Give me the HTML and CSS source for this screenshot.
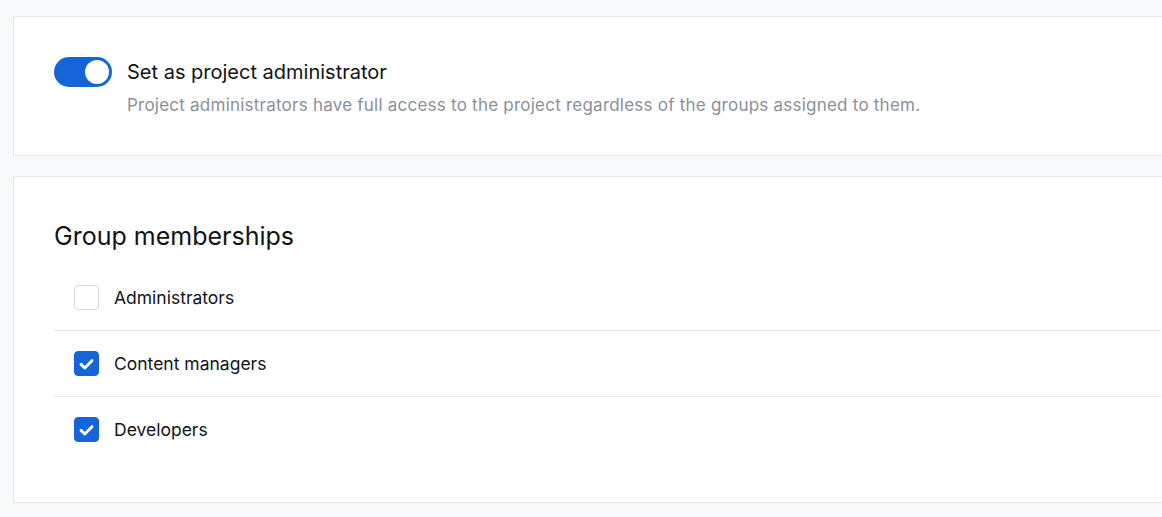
FILE: index.html
```html
<!DOCTYPE html>
<html lang="en">
<head>
<meta charset="utf-8">
<title>Project member</title>
<link rel="stylesheet" href="styles.css">
</head>
<body>
<main class="page">
  <section class="card card-admin">
    <div class="toggle-row">
      <span class="toggle on" role="switch" aria-checked="true"><span class="knob"></span></span>
      <div class="toggle-text">
        <div class="toggle-title">Set as project administrator</div>
        <div class="toggle-desc">Project administrators have full access to the project regardless of the groups assigned to them.</div>
      </div>
    </div>
  </section>
  <section class="card card-groups">
    <h2 class="groups-title">Group memberships</h2>
    <ul class="group-list">
      <li class="group-row">
        <span class="check"></span>
        <span class="group-label">Administrators</span>
      </li>
      <li class="group-row">
        <span class="check checked"><svg viewBox="0 0 24 24"><path d="M6.3 12.4l3.9 3.7 7.5-7.6" fill="none" stroke="#fff" stroke-width="3" stroke-linecap="round" stroke-linejoin="round"/></svg></span>
        <span class="group-label">Content managers</span>
      </li>
      <li class="group-row">
        <span class="check checked"><svg viewBox="0 0 24 24"><path d="M6.3 12.4l3.9 3.7 7.5-7.6" fill="none" stroke="#fff" stroke-width="3" stroke-linecap="round" stroke-linejoin="round"/></svg></span>
        <span class="group-label">Developers</span>
      </li>
    </ul>
  </section>
</main>
</body>
</html>
```
FILE: styles.css
```css
html, body {
  margin: 0;
  padding: 0;
  background: #f8f9fb;
  overflow: hidden;
}
body {
  font-family: Inter, "Noto Sans", sans-serif;
  color: #14171c;
}
.page {
  padding: 16px 0 0 13px;
  display: flex;
  flex-direction: column;
  gap: 20px;
}
.card {
  background: #fff;
  border: 1px solid #e2e7ee;
  margin-right: -40px;
}
.card-admin {
  padding: 40px 40px 38px 40px;
}
.toggle-row {
  display: flex;
  align-items: flex-start;
  gap: 15px;
}
.toggle {
  flex: none;
  width: 58px;
  height: 30px;
  border-radius: 15px;
  background: #1565d8;
  position: relative;
}
.toggle .knob {
  position: absolute;
  top: 3px;
  right: 3px;
  width: 24px;
  height: 24px;
  border-radius: 50%;
  background: #fff;
}
.toggle-text {
  display: flex;
  flex-direction: column;
}
.toggle-title {
  font-size: 20px;
  line-height: 30px;
  color: #111318;
}
.toggle-desc {
  font-size: 17px;
  line-height: 24px;
  margin-top: 6px;
  color: #8b9099;
  letter-spacing: 0.23px;
}
.card-groups {
  padding: 41px 40px 40px 40px;
}
.groups-title {
  margin: 0;
  font-size: 25px;
  font-weight: 400;
  line-height: 36px;
  color: #111318;
}
.group-list {
  list-style: none;
  margin: 11px 0 0 0;
  padding: 0;
}
.group-row {
  display: flex;
  align-items: center;
  gap: 15px;
  height: 66px;
  padding-left: 20px;
  border-top: 1px solid #e2e7ee;
  box-sizing: border-box;
}
.group-row:first-child {
  border-top: none;
  height: 65px;
}
.check {
  width: 25px;
  height: 25px;
  box-sizing: border-box;
  border: 1px solid #d4d9e0;
  border-radius: 4px;
  background: #fff;
  display: flex;
  align-items: center;
  justify-content: center;
}
.check.checked {
  background: #1565d8;
  border-color: #1565d8;
}
.check svg {
  width: 24px;
  height: 24px;
}
.group-label {
  font-size: 17.5px;
  color: #111318;
}
```
